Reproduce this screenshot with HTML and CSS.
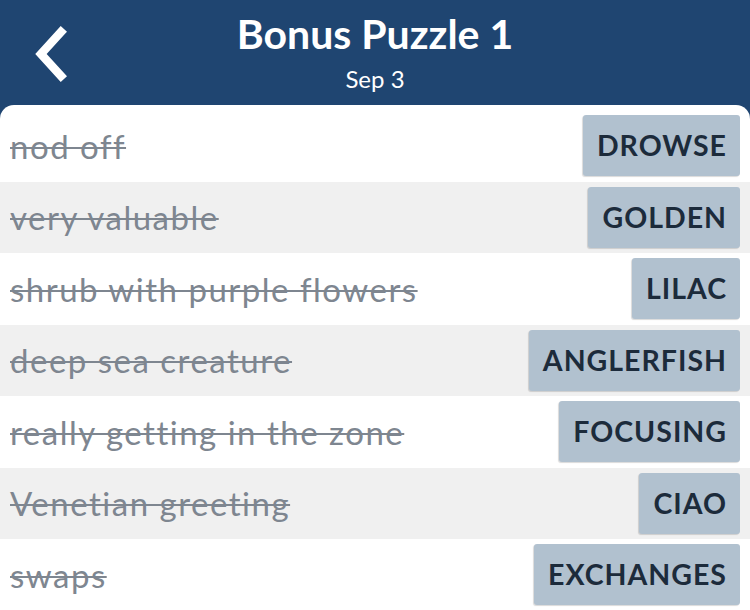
FILE: index.html
```html
<!DOCTYPE html>
<html lang="en">
<head>
    <meta charset="UTF-8">
    <title>Bonus Puzzle 1</title>
    <link rel="stylesheet" href="styles.css">
</head>
<body>

<!-- Cabeçalho -->
<div class="header">
    <button class="back" aria-label="Back">
        <svg width="40" height="56" viewBox="0 0 40 56"><path d="M31 6 L11 28 L31 50" fill="none" stroke="#fff" stroke-width="8.5" stroke-linecap="square"/></svg>
    </button>
    <div class="title">
        <h1>Bonus Puzzle 1</h1>
        <p>Sep 3</p>
    </div>
</div>

<!-- Lista de pistas -->
<div class="list">
    <div class="row"><span class="clue">nod off</span><span class="answer">DROWSE</span></div>
    <div class="row"><span class="clue">very valuable</span><span class="answer">GOLDEN</span></div>
    <div class="row"><span class="clue">shrub with purple flowers</span><span class="answer">LILAC</span></div>
    <div class="row"><span class="clue">deep sea creature</span><span class="answer">ANGLERFISH</span></div>
    <div class="row"><span class="clue">really getting in the zone</span><span class="answer">FOCUSING</span></div>
    <div class="row"><span class="clue">Venetian greeting</span><span class="answer">CIAO</span></div>
    <div class="row"><span class="clue">swaps</span><span class="answer">EXCHANGES</span></div>
</div>

</body>
</html>
```

FILE: styles.css
```css
body { margin: 0; background-color: #1f4571; font-family: Lato, "Noto Sans", sans-serif; height: 610px; overflow: hidden; }
.header { display: flex; align-items: flex-start; justify-content: center; height: 105px; box-sizing: border-box; padding-top: 11px; position: relative; color: white; }
.back { position: absolute; left: 30px; top: 26px; background: none; border: none; padding: 0; cursor: pointer; }
.back svg { display: block; }
.title { text-align: center; }
.title h1 { margin: 0; font-size: 41px; font-weight: bold; line-height: 46px; }
.title p { margin: 7px 0 0; font-size: 24px; line-height: 30px; }
.list { background-color: white; border-radius: 14px 14px 0 0; padding-top: 5px; height: 505px; overflow: hidden; }
.row { display: flex; align-items: center; justify-content: space-between; height: 71.5px; padding: 0 10px; box-sizing: border-box; }
.row:nth-child(even) { background-color: #f0f0f0; }
.clue { font-size: 33px; letter-spacing: 1.5px; color: #7e8690; text-decoration: line-through; text-decoration-thickness: 2px; }
.answer { background-color: #b1c1cf; color: #1c2b3b; font-weight: bold; font-size: 28.5px; letter-spacing: 1px; height: 61px; line-height: 61px; padding: 0 13px 0 14px; border-radius: 3px; box-shadow: -1px 1px 1px rgba(0, 0, 0, 0.15); }
```
